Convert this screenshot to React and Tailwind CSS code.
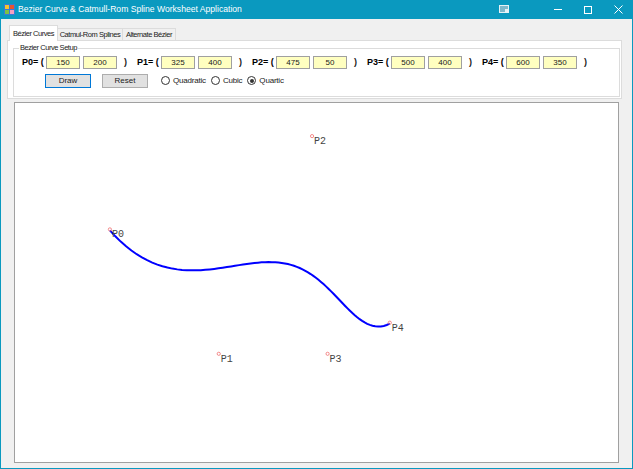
import React from 'react';

const pts = [
  [150, 200],
  [325, 400],
  [475, 50],
  [500, 400],
  [600, 350],
];

// map world coords onto the canvas (inside the 1px border)
const mx = (x) => x * 0.622 + 1.6;
const my = (y) => y * 0.622 + 3;

const curvePath = (() => {
  const binom = [1, 4, 6, 4, 1];
  let d = '';
  for (let i = 0; i <= 80; i++) {
    const t = i / 80;
    let x = 0;
    let y = 0;
    pts.forEach(([px, py], k) => {
      const w = binom[k] * Math.pow(1 - t, 4 - k) * Math.pow(t, k);
      x += w * px;
      y += w * py;
    });
    d += `${i === 0 ? 'M' : 'L'}${mx(x).toFixed(2)} ${my(y).toFixed(2)} `;
  }
  return d;
})();

const PointInput = ({ label, a, b }) => (
  <div className="flex items-center w-[115px] shrink-0">
    <span className="w-[24px] font-bold text-[9px] text-black whitespace-nowrap">{label}</span>
    <div className="w-[34px] h-[13px] bg-[#ffffc0] border border-[#a0a0a0] flex items-center justify-center text-[8px]">{a}</div>
    <div className="w-[34px] h-[13px] ml-[3px] bg-[#ffffc0] border border-[#a0a0a0] flex items-center justify-center text-[8px]">{b}</div>
    <span className="ml-[7px] font-bold text-[9px]">)</span>
  </div>
);

const Radio = ({ label, checked }) => (
  <label className="flex items-center mr-[5px]">
    <span className="w-[9px] h-[9px] rounded-full border border-[#333] bg-white flex items-center justify-center">
      {checked && <span className="w-[4px] h-[4px] rounded-full bg-[#333]" />}
    </span>
    <span className="ml-[3px] text-[8px] tracking-[-0.2px]">{label}</span>
  </label>
);

export default function App() {
  return (
    <div
      className="w-[633px] h-[469px] flex flex-col bg-[#0a99bf] text-[#1a1a1a] overflow-hidden"
      style={{ fontFamily: '"Liberation Sans", Arial, sans-serif' }}
    >
      {/* title bar */}
      <div className="h-[19px] shrink-0 flex items-center text-white">
        <svg width="11" height="11" viewBox="0 0 11 11" className="ml-[4px]">
          <rect x="0" y="0" width="11" height="11" fill="#3a7bd5" />
          <rect x="1" y="1" width="4" height="4" fill="#f4c430" />
          <rect x="6" y="1" width="4" height="4" fill="#e8542f" />
          <rect x="1" y="6" width="4" height="4" fill="#7fc241" />
          <rect x="6" y="6" width="4" height="4" fill="#f4a0c0" />
        </svg>
        <span className="ml-[3px] text-[8.6px] whitespace-nowrap">Bezier Curve &amp; Catmull-Rom Spline Worksheet Application</span>
        <div className="ml-auto flex items-center h-full">
          <svg width="11" height="9" viewBox="0 0 11 9" className="mr-[33px]">
            <rect x="0.5" y="0.5" width="9" height="7" fill="#7fb9cc" stroke="#e6f2f6" />
            <rect x="6" y="4" width="4" height="4" fill="#e6f2f6" />
          </svg>
          <div className="w-[30px] flex justify-center">
            <div className="w-[8px] h-px bg-white" />
          </div>
          <div className="w-[30px] flex justify-center">
            <div className="w-[8px] h-[8px] border border-white" />
          </div>
          <div className="w-[30px] flex justify-center">
            <svg width="9" height="9" viewBox="0 0 9 9">
              <path d="M0.5 0.5 L8.5 8.5 M8.5 0.5 L0.5 8.5" stroke="white" strokeWidth="1" />
            </svg>
          </div>
        </div>
      </div>

      {/* client area */}
      <div className="flex-1 mx-px mb-px bg-[#f0f0f0] flex flex-col">
        {/* tab control */}
        <div className="ml-[6px] mt-[6px] w-[615px]">
          <div className="flex items-end h-[15px] pl-[2px] text-[7.5px] tracking-[-0.45px] whitespace-nowrap">
            <div className="relative z-10 -mb-px h-[16px] w-[49px] bg-white border border-b-0 border-[#dcdcdc] flex items-center justify-center">
              Bézier Curves
            </div>
            <div className="h-[12px] w-[65px] bg-[#f0f0f0] border border-l-0 border-b-0 border-[#dcdcdc] flex items-center justify-center">
              Catmul-Rom Splines
            </div>
            <div className="h-[12px] w-[53px] bg-[#f0f0f0] border border-l-0 border-b-0 border-[#dcdcdc] flex items-center justify-center">
              Alternate Bézier
            </div>
          </div>
          <div className="h-[59px] bg-white border border-[#dcdcdc] pl-[5px] pt-[7px]">
            {/* group box */}
            <div className="relative w-[607px] h-[49px] border border-[#dcdcdc] pl-[8px] pt-[7px]">
              <span className="absolute left-[5px] -top-[6px] bg-white px-[1px] text-[7.5px] tracking-[-0.45px] leading-[10px] whitespace-nowrap">
                Bezier Curve Setup
              </span>
              <div className="flex items-center">
                <PointInput label="P0= (" a="150" b="200" />
                <PointInput label="P1= (" a="325" b="400" />
                <PointInput label="P2= (" a="475" b="50" />
                <PointInput label="P3= (" a="500" b="400" />
                <PointInput label="P4= (" a="600" b="350" />
              </div>
              <div className="flex items-center mt-[4px] ml-[23px]">
                <button className="w-[46px] h-[14px] bg-[#e1e1e1] border border-[#0078d7] text-[8px] leading-none">
                  Draw
                </button>
                <button className="ml-[11px] w-[46px] h-[14px] bg-[#e1e1e1] border border-[#adadad] text-[8px] leading-none">
                  Reset
                </button>
                <div className="ml-[13px] flex items-center">
                  <Radio label="Quadratic" />
                  <Radio label="Cubic" />
                  <Radio label="Quartic" checked />
                </div>
              </div>
            </div>
          </div>
        </div>

        {/* drawing canvas */}
        <div className="ml-[13px] mt-[3px] w-[605px] h-[361px] bg-white border border-[#a0a0a0]">
          <svg width="603" height="359" className="block">
            <path d={curvePath} fill="none" stroke="#0000ff" strokeWidth="2" />
            {pts.map(([x, y], i) => (
              <g key={i}>
                <circle cx={mx(x)} cy={my(y) - 1} r="1.6" fill="none" stroke="#f07070" strokeWidth="0.8" />
                <text
                  x={mx(x) + 2}
                  y={my(y) + 7}
                  fontSize="10"
                  fill="#444"
                  fontFamily='"Liberation Mono", "Courier New", monospace'
                >
                  {`P${i}`}
                </text>
              </g>
            ))}
          </svg>
        </div>
      </div>
    </div>
  );
}
